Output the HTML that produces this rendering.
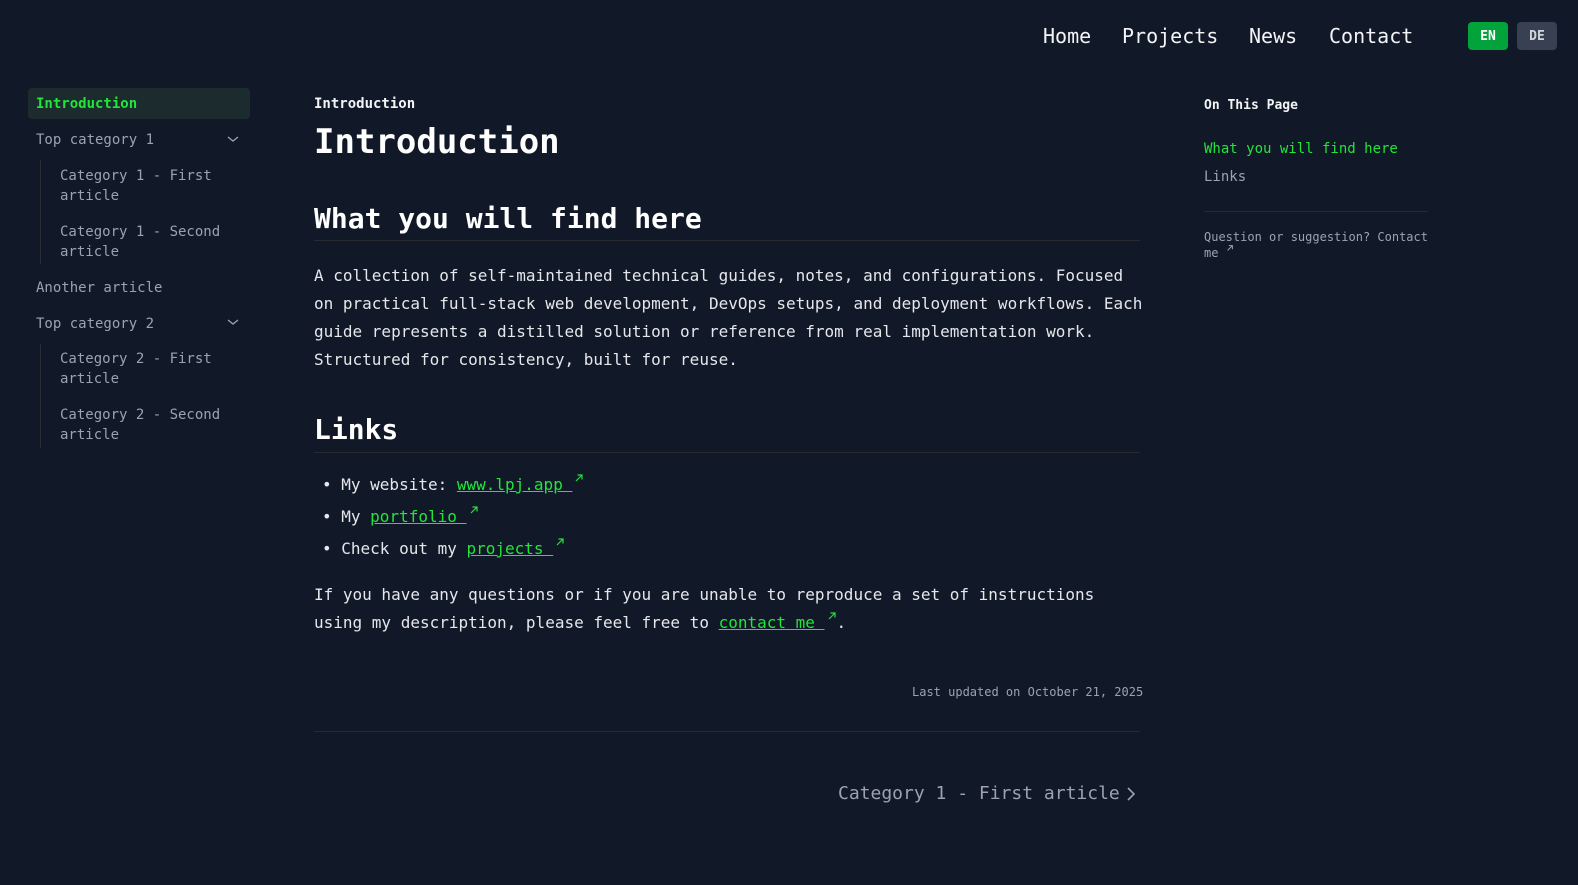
<!DOCTYPE html>
<html><head><meta charset="utf-8"><style>
*{margin:0;padding:0;box-sizing:border-box}
body{width:1578px;height:885px;background:#111827;font-family:"DejaVu Sans Mono","Liberation Mono",monospace;color:#e5e7eb;position:relative;overflow:hidden}
.a{position:absolute;white-space:nowrap}
.nav{font-size:20px;color:#f3f4f6;top:24px}
.btn{position:absolute;top:22px;height:28px;border-radius:4px;font-size:13px;font-weight:bold;display:flex;align-items:center;justify-content:center}
.sb{font-size:14px;color:#9ca3af;line-height:20px}
.body{font-size:16px;color:#e5e7eb;line-height:28px}
a{color:#22e53a;text-decoration:underline}
.hr{position:absolute;height:1px;background:#272a2e}
.ext{display:inline-block;margin-left:2px;width:10px;height:10px;position:relative;top:-7px}
</style></head><body>
<div class="a nav" style="left:1043px">Home</div>
<div class="a nav" style="left:1122px">Projects</div>
<div class="a nav" style="left:1249px">News</div>
<div class="a nav" style="left:1329px">Contact</div>
<div class="btn" style="left:1468px;width:40px;background:#02a33b;color:#fff">EN</div>
<div class="btn" style="left:1517px;width:40px;background:#374151;color:#d1d5db">DE</div>

<div style="position:absolute;left:28px;top:88px;width:222px;height:31px;background:#1c2b2e;border-radius:4px"></div>
<div class="a sb" style="left:36px;top:94px;color:#22e53a;font-weight:bold">Introduction</div>
<div class="a sb" style="left:36px;top:130px">Top category 1</div>
<svg class="a" style="left:227px;top:134px" width="12" height="10"><path d="M1 3l5 4 5-4" stroke="#9ca3af" stroke-width="1.3" fill="none"/></svg>
<div style="position:absolute;left:40px;top:160px;width:1px;height:104px;background:#2a2d33"></div>
<div class="a sb" style="left:60px;top:166px">Category 1 - First<br>article</div>
<div class="a sb" style="left:60px;top:222px">Category 1 - Second<br>article</div>
<div class="a sb" style="left:36px;top:278px">Another article</div>
<div class="a sb" style="left:36px;top:314px">Top category 2</div>
<svg class="a" style="left:227px;top:317px" width="12" height="10"><path d="M1 3l5 4 5-4" stroke="#9ca3af" stroke-width="1.3" fill="none"/></svg>
<div style="position:absolute;left:40px;top:344px;width:1px;height:104px;background:#2a2d33"></div>
<div class="a sb" style="left:60px;top:349px">Category 2 - First<br>article</div>
<div class="a sb" style="left:60px;top:405px">Category 2 - Second<br>article</div>

<div class="a" style="left:314px;top:96px;font-size:14px;font-weight:bold;color:#f3f4f6">Introduction</div>
<div class="a" style="left:314px;top:122px;font-size:34px;font-weight:bold;color:#fff">Introduction</div>
<div class="a" style="left:314px;top:202px;font-size:28px;font-weight:bold;color:#fff">What you will find here</div>
<div class="hr" style="left:314px;top:240px;width:826px"></div>
<div class="a body" style="left:314px;top:262px">A collection of self-maintained technical guides, notes, and configurations. Focused<br>on practical full-stack web development, DevOps setups, and deployment workflows. Each<br>guide represents a distilled solution or reference from real implementation work.<br>Structured for consistency, built for reuse.</div>
<div class="a" style="left:314px;top:413px;font-size:28px;font-weight:bold;color:#fff">Links</div>
<div class="hr" style="left:314px;top:452px;width:826px"></div>
<div class="a body" style="left:322px;top:471px">• My website: <a>www.lpj.app </a><svg class="ext" viewBox="0 0 10 10"><path d="M2 8L8 2M3.5 2H8V6.5" stroke="#22e53a" stroke-width="1.2" fill="none"/></svg></div>
<div class="a body" style="left:322px;top:503px">• My <a>portfolio </a><svg class="ext" viewBox="0 0 10 10"><path d="M2 8L8 2M3.5 2H8V6.5" stroke="#22e53a" stroke-width="1.2" fill="none"/></svg></div>
<div class="a body" style="left:322px;top:535px">• Check out my <a>projects </a><svg class="ext" viewBox="0 0 10 10"><path d="M2 8L8 2M3.5 2H8V6.5" stroke="#22e53a" stroke-width="1.2" fill="none"/></svg></div>
<div class="a body" style="left:314px;top:581px">If you have any questions or if you are unable to reproduce a set of instructions</div>
<div class="a body" style="left:314px;top:609px">using my description, please feel free to <a>contact me </a><svg class="ext" viewBox="0 0 10 10"><path d="M2 8L8 2M3.5 2H8V6.5" stroke="#22e53a" stroke-width="1.2" fill="none"/></svg>.</div>
<div class="a" style="left:912px;top:685px;font-size:12px;color:#9ca3af;width:228px;text-align:right">Last updated on October 21, 2025</div>
<div class="hr" style="left:314px;top:731px;width:826px"></div>
<div class="a" style="left:838px;top:783px;font-size:18px;color:#9ca3af">Category 1 - First article</div>
<svg class="a" style="left:1125px;top:786px" width="12" height="16"><path d="M3 2l6 6-6 6" stroke="#9ca3af" stroke-width="1.6" fill="none"/></svg>

<div class="a" style="left:1204px;top:98px;font-size:13px;font-weight:bold;color:#f3f4f6">On This Page</div>
<div class="a" style="left:1204px;top:141px;font-size:14px;color:#22e53a">What you will find here</div>
<div class="a" style="left:1204px;top:169px;font-size:14px;color:#9ca3af">Links</div>
<div class="hr" style="left:1204px;top:211px;width:224px"></div>
<div class="a" style="left:1204px;top:229px;font-size:12px;color:#9ca3af;line-height:16px">Question or suggestion? Contact<br>me <svg style="display:inline-block;width:8px;height:8px;position:relative;top:-5px" viewBox="0 0 10 10"><path d="M2 8L8 2M3.5 2H8V6.5" stroke="#9ca3af" stroke-width="1.2" fill="none"/></svg></div>
</body></html>
